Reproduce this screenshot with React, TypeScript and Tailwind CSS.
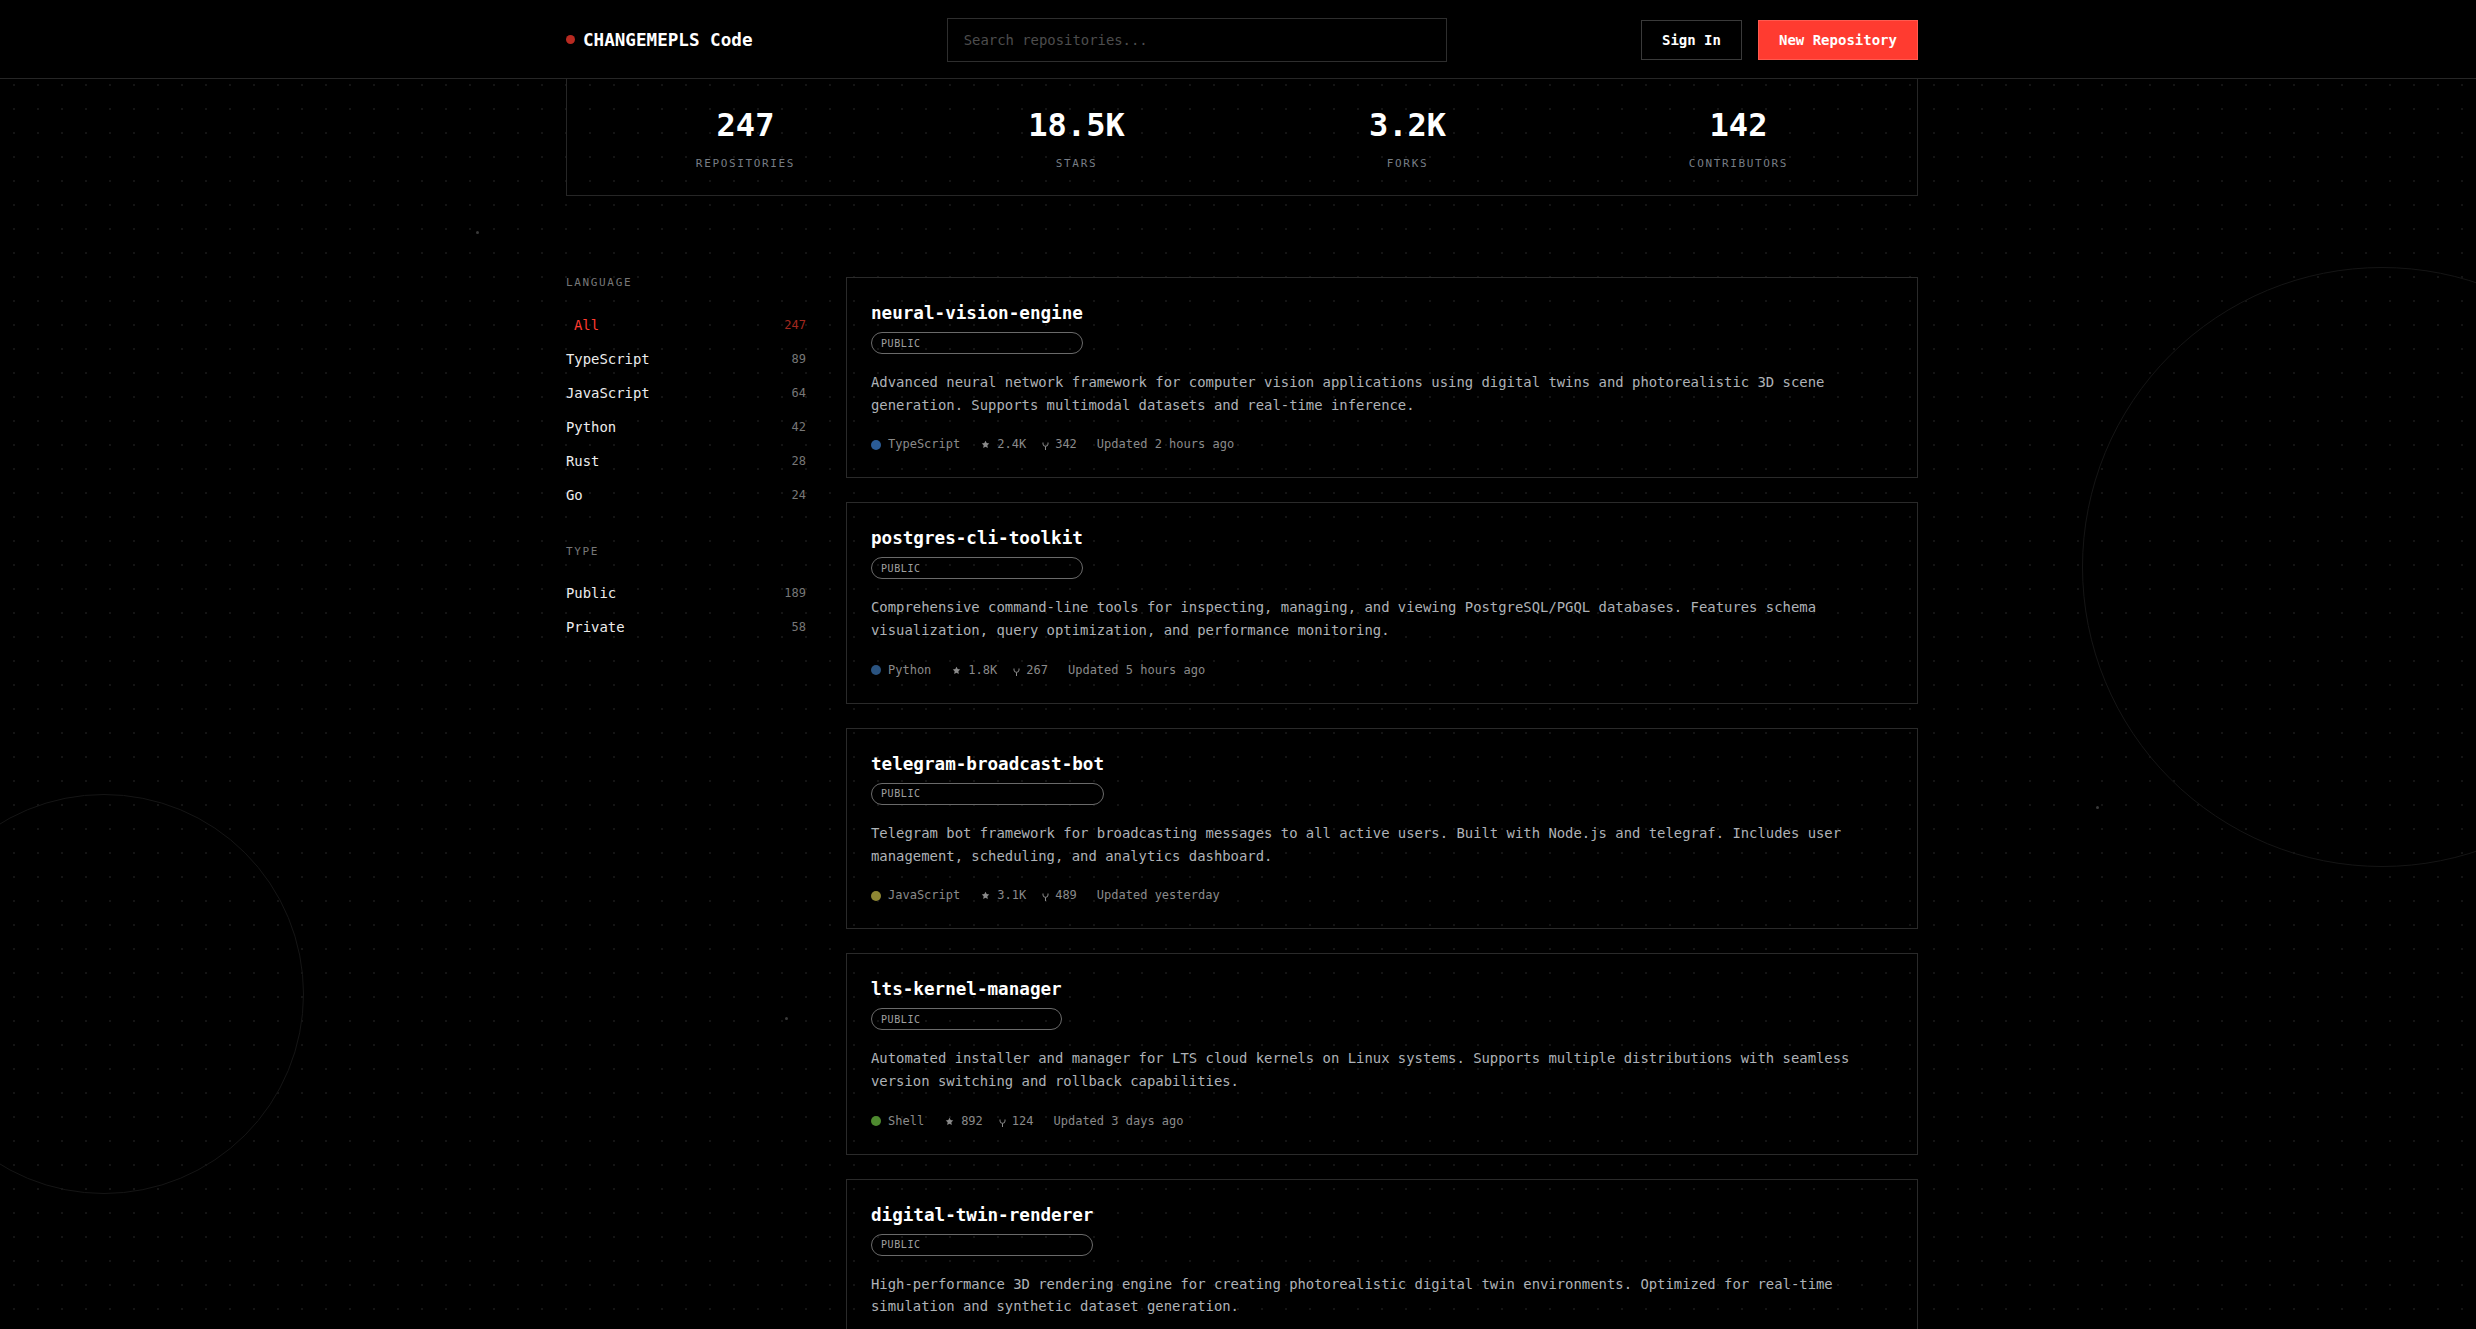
import React from "react";

type Repo = {
  name: string;
  desc: string;
  lang: string;
  color: string;
  stars: string;
  forks: string;
  updated: string;
};

const repos: Repo[] = [
  {
    name: "neural-vision-engine",
    desc: "Advanced neural network framework for computer vision applications using digital twins and photorealistic 3D scene generation. Supports multimodal datasets and real-time inference.",
    lang: "TypeScript",
    color: "#2b5c96",
    stars: "2.4K",
    forks: "342",
    updated: "Updated 2 hours ago",
  },
  {
    name: "postgres-cli-toolkit",
    desc: "Comprehensive command-line tools for inspecting, managing, and viewing PostgreSQL/PGQL databases. Features schema visualization, query optimization, and performance monitoring.",
    lang: "Python",
    color: "#2a5380",
    stars: "1.8K",
    forks: "267",
    updated: "Updated 5 hours ago",
  },
  {
    name: "telegram-broadcast-bot",
    desc: "Telegram bot framework for broadcasting messages to all active users. Built with Node.js and telegraf. Includes user management, scheduling, and analytics dashboard.",
    lang: "JavaScript",
    color: "#8f8734",
    stars: "3.1K",
    forks: "489",
    updated: "Updated yesterday",
  },
  {
    name: "lts-kernel-manager",
    desc: "Automated installer and manager for LTS cloud kernels on Linux systems. Supports multiple distributions with seamless version switching and rollback capabilities.",
    lang: "Shell",
    color: "#4e8a2f",
    stars: "892",
    forks: "124",
    updated: "Updated 3 days ago",
  },
  {
    name: "digital-twin-renderer",
    desc: "High-performance 3D rendering engine for creating photorealistic digital twin environments. Optimized for real-time simulation and synthetic dataset generation.",
    lang: "TypeScript",
    color: "#2b5c96",
    stars: "1.2K",
    forks: "156",
    updated: "Updated 1 week ago",
  },
];

const languages = [
  { name: "All", count: "247", active: true },
  { name: "TypeScript", count: "89" },
  { name: "JavaScript", count: "64" },
  { name: "Python", count: "42" },
  { name: "Rust", count: "28" },
  { name: "Go", count: "24" },
];

const types = [
  { name: "Public", count: "189" },
  { name: "Private", count: "58" },
];

const stats = [
  { value: "247", label: "REPOSITORIES" },
  { value: "18.5K", label: "STARS" },
  { value: "3.2K", label: "FORKS" },
  { value: "142", label: "CONTRIBUTORS" },
];

function Star() {
  return (
    <svg width="9" height="9" viewBox="0 0 24 24" className="shrink-0">
      <path
        d="M12 2l3.09 6.26L22 9.27l-5 4.87 1.18 6.88L12 17.77l-6.18 3.25L7 14.14 2 9.27l6.91-1.01L12 2z"
        fill="currentColor"
      />
    </svg>
  );
}

function Fork() {
  return (
    <svg width="7" height="8" viewBox="0 0 7 8" className="mt-[3px] shrink-0">
      <path
        d="M1 0.5 V2 Q1 4.3 3.5 4.3 Q6 4.3 6 2 V0.5 M3.5 4.3 V8"
        fill="none"
        stroke="currentColor"
        strokeWidth="1"
      />
    </svg>
  );
}

function SideItem({
  name,
  count,
  active,
}: {
  name: string;
  count: string;
  active?: boolean;
}) {
  return (
    <div className="flex h-[34px] items-center justify-between">
      <span
        className={
          active
            ? "pl-2 text-[13.9px] text-[#ff3b30]"
            : "text-[13.9px] text-[#ededed]"
        }
      >
        {name}
      </span>
      <span className={active ? "text-xs text-[#a3281f]" : "text-xs text-[#777777]"}>
        {count}
      </span>
    </div>
  );
}

function RepoCard({ repo }: { repo: Repo }) {
  return (
    <div className="border border-[#2a2a2a] p-6">
      <div className="inline-flex flex-col gap-2">
        <h3 className="text-[17.6px] font-bold leading-[22px] text-white">
          {repo.name}
        </h3>
        <span className="flex h-[22px] items-center rounded-full border border-[#6a6a6a] px-[9px] text-[10px] tracking-[0.06em] text-[#a0a0a0]">
          PUBLIC
        </span>
      </div>
      <p className="mt-[17px] max-w-[1000px] text-[13.9px] leading-[22.7px] text-[#aeb2b7]">
        {repo.desc}
      </p>
      <div className="mt-5 flex items-center text-xs leading-[17px] text-[#8a8a8a]">
        <span className="flex items-center gap-[7px]">
          <span
            className="h-[10px] w-[10px] rounded-full"
            style={{ backgroundColor: repo.color }}
          />
          {repo.lang}
        </span>
        <span className="ml-[21px] flex items-center gap-[7px]">
          <Star />
          {repo.stars}
        </span>
        <span className="ml-4 flex items-center gap-[6px]">
          <Fork />
          {repo.forks}
        </span>
        <span className="ml-5">{repo.updated}</span>
      </div>
    </div>
  );
}

export default function App() {
  return (
    <div className="relative h-screen overflow-hidden bg-black font-['DejaVu_Sans_Mono',monospace] [background-image:radial-gradient(circle,#141414_1px,transparent_1.4px)] [background-position:2px_1px] [background-size:24px_24px]">
      {/* decorative background */}
      <div className="pointer-events-none absolute left-[-96px] top-[794px] h-[400px] w-[400px] rounded-full border border-[#151515]" />
      <div className="pointer-events-none absolute left-[2082px] top-[267px] h-[600px] w-[600px] rounded-full border border-[#151515]" />
      <div className="pointer-events-none absolute left-[476px] top-[231px] h-[3px] w-[3px] rounded-full bg-[#3a3a3a]" />
      <div className="pointer-events-none absolute left-[785px] top-[1017px] h-[3px] w-[3px] rounded-full bg-[#3a3a3a]" />
      <div className="pointer-events-none absolute left-[2096px] top-[806px] h-[3px] w-[3px] rounded-full bg-[#3a3a3a]" />

      <div className="relative z-10">
        <header className="border-b border-[#262626] bg-black">
          <div className="mx-auto flex h-[78px] max-w-[1400px] items-center justify-between pl-[28px] pr-[20px] pt-[2px]">
            <div className="flex items-center gap-2">
              <span className="h-[9px] w-[9px] rounded-full bg-[#b82a21]" />
              <span className="text-[17.6px] font-bold text-white">
                CHANGEMEPLS Code
              </span>
            </div>
            <input
              type="text"
              placeholder="Search repositories..."
              className="h-11 w-[500px] border border-[#2e2e2e] bg-transparent px-4 text-[13.9px] text-white outline-none placeholder:text-[#4d4d4d]"
            />
            <div className="flex items-center gap-4">
              <button className="flex h-10 items-center border border-[#3a3a3a] px-5 text-[14px] font-bold text-white">
                Sign In
              </button>
              <button className="flex h-10 items-center border border-[#ff5a50] bg-[#ff3b30] px-5 text-[14px] font-bold text-white">
                New Repository
              </button>
            </div>
          </div>
        </header>

        <main className="mx-auto max-w-[1400px] pl-[28px] pr-[20px]">
          <section className="grid grid-cols-4 border-x border-b border-[#262626] px-[13px] pb-[23px] pt-[28px]">
            {stats.map((s) => (
              <div key={s.label} className="flex flex-col items-center">
                <span className="text-[32px] font-bold leading-[37px] text-white">
                  {s.value}
                </span>
                <span className="mt-[12px] text-[11px] leading-4 tracking-[0.15em] text-[#777d85]">
                  {s.label}
                </span>
              </div>
            ))}
          </section>

          <div className="mt-[81px] flex gap-10">
            <aside className="w-[240px] shrink-0">
              <div className="mb-[19px] text-[11px] leading-[12px] tracking-[0.15em] text-[#777777]">
                LANGUAGE
              </div>
              {languages.map((l) => (
                <SideItem key={l.name} {...l} />
              ))}
              <div className="mb-[18px] mt-[34px] text-[11px] leading-[12px] tracking-[0.15em] text-[#777777]">
                TYPE
              </div>
              {types.map((t) => (
                <SideItem key={t.name} {...t} />
              ))}
            </aside>

            <div className="flex min-w-0 flex-1 flex-col gap-6">
              {repos.map((r) => (
                <RepoCard key={r.name} repo={r} />
              ))}
            </div>
          </div>
        </main>
      </div>
    </div>
  );
}
